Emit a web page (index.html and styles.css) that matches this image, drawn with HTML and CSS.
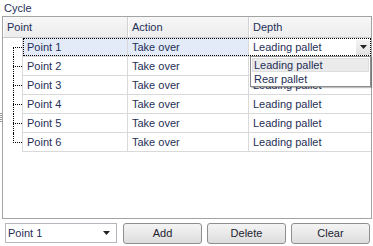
FILE: index.html
```html
<!DOCTYPE html>
<html>
<head>
<meta charset="utf-8">
<link rel="stylesheet" href="styles.css">
</head>
<body>
<div class="app">
  <div class="title">Cycle</div>
  <div class="main">
    <div class="grip"></div>
    <div class="grid">
      <div class="hdr">
        <div class="hc">Point</div>
        <div class="hc">Action</div>
        <div class="hc last">Depth</div>
      </div>
      <div class="row sel first">
        <div class="rh"></div>
        <div class="c">Point 1</div>
        <div class="c">Take over</div>
        <div class="c last editor"><span>Leading pallet</span><span class="dbtn"><svg width="7" height="4" viewBox="0 0 7 4"><polygon points="0,0 7,0 3.5,4" fill="#222"/></svg></span></div>
        <div class="focus"></div>
      </div>
      <div class="row">
        <div class="rh"></div>
        <div class="c">Point 2</div>
        <div class="c">Take over</div>
        <div class="c last">Leading pallet</div>
      </div>
      <div class="row">
        <div class="rh"></div>
        <div class="c">Point 3</div>
        <div class="c">Take over</div>
        <div class="c last">Leading pallet</div>
      </div>
      <div class="row">
        <div class="rh"></div>
        <div class="c">Point 4</div>
        <div class="c">Take over</div>
        <div class="c last">Leading pallet</div>
      </div>
      <div class="row">
        <div class="rh"></div>
        <div class="c">Point 5</div>
        <div class="c">Take over</div>
        <div class="c last">Leading pallet</div>
      </div>
      <div class="row lastrow">
        <div class="rh"></div>
        <div class="c">Point 6</div>
        <div class="c">Take over</div>
        <div class="c last">Leading pallet</div>
      </div>
      <div class="popup">
        <div class="item hot">Leading pallet</div>
        <div class="item">Rear pallet</div>
      </div>
    </div>
  </div>
  <div class="bottom">
    <div class="combo"><span>Point 1</span><svg width="7" height="4" viewBox="0 0 7 4"><polygon points="0,0 7,0 3.5,4" fill="#222"/></svg></div>
    <div class="btn add">Add</div>
    <div class="btn">Delete</div>
    <div class="btn">Clear</div>
  </div>
</div>
</body>
</html>
```

FILE: styles.css
```css
html, body {
  margin: 0;
  padding: 0;
  background: #fff;
}
body {
  font-family: "Liberation Sans", Arial, sans-serif;
  font-size: 11px;
  color: #1f2f57;
}
.app {
  width: 373px;
  height: 246px;
  display: flex;
  flex-direction: column;
}
.title {
  height: 16px;
  padding-left: 4px;
  line-height: 14px;
  padding-top: 1px;
  box-sizing: border-box;
}
.main {
  display: flex;
  align-items: center;
}
.grip {
  width: 2px;
  height: 10px;
  background: repeating-linear-gradient(to bottom, #9a9a9a 0 1px, #fff 1px 2px);
}
.grid {
  position: relative;
  width: 370px;
  height: 203px;
  box-sizing: border-box;
  border: 1px solid #a3a3a3;
  background: #fff;
}
.hdr {
  display: grid;
  grid-template-columns: 125px 121px 1fr;
  height: 21px;
  box-sizing: border-box;
  border-bottom: 1px solid #c9c9c9;
  background: linear-gradient(#f7f7f7, #ececec);
}
.hc {
  line-height: 20px;
  padding-left: 4px;
  border-right: 1px solid #d2d2d2;
  box-shadow: inset 1px 0 0 #fff;
}
.hc.last {
  border-right: none;
}
.row {
  position: relative;
  display: grid;
  grid-template-columns: 20px 105px 121px 1fr;
  height: 19px;
}
.rh {
  position: relative;
  border-right: 1px solid #d9d9d9;
}
.rh::before {
  content: "";
  position: absolute;
  left: 10px;
  right: 0;
  top: 9px;
  border-top: 1px dotted #000;
}
.rh::after {
  content: "";
  position: absolute;
  left: 10px;
  top: 0;
  bottom: 0;
  border-left: 1px dotted #000;
}
.row.first .rh::after {
  top: 9px;
}
.row.lastrow .rh::after {
  bottom: 9px;
}
.c {
  line-height: 18px;
  padding-left: 4px;
  border-right: 1px solid #d9d9d9;
  border-bottom: 1px solid #d9d9d9;
  white-space: nowrap;
  overflow: hidden;
}
.c.last {
  border-right: none;
}
.row.sel .c {
  background: #e3ebf9;
}
.row.sel .c.editor {
  background: #fff;
  display: flex;
  justify-content: space-between;
  align-items: center;
  padding-right: 1px;
}
.dbtn {
  width: 14px;
  height: 15px;
  background: linear-gradient(#f3f3f3, #e2e2e2);
  display: flex;
  align-items: center;
  justify-content: center;
}
.focus {
  position: absolute;
  left: 20px;
  right: 0;
  top: 0;
  height: 18px;
  border: 1px dotted #000;
  box-sizing: border-box;
  pointer-events: none;
}
.popup {
  position: absolute;
  left: 247px;
  top: 39px;
  width: 121px;
  height: 31px;
  box-sizing: border-box;
  border: 1px solid #8c8c8c;
  background: #fff;
  padding: 1px;
  box-shadow: 1px 1px 1px rgba(0,0,0,0.25);
}
.item {
  height: 14px;
  line-height: 14px;
  padding-left: 2px;
}
.item.hot {
  background: #ebebeb;
  box-shadow: inset 0 0 0 1px #dedede;
}
.bottom {
  display: flex;
  align-items: flex-start;
  padding-left: 5px;
  margin-top: 4px;
  gap: 5px;
}
.combo {
  width: 112px;
  height: 20px;
  box-sizing: border-box;
  border: 1px solid #b4b8be;
  background: #fff;
  display: flex;
  align-items: center;
  justify-content: space-between;
  padding: 0 6px 0 2px;
}
.btn {
  width: 79px;
  height: 21px;
  box-sizing: border-box;
  border: 1px solid #8f8f8f;
  border-radius: 3px;
  background: linear-gradient(#f4f4f4, #e9e9e9 50%, #dcdcdc);
  text-align: center;
  line-height: 19px;
  color: #1e2330;
}
.btn.add {
  margin-left: 1px;
}
```
